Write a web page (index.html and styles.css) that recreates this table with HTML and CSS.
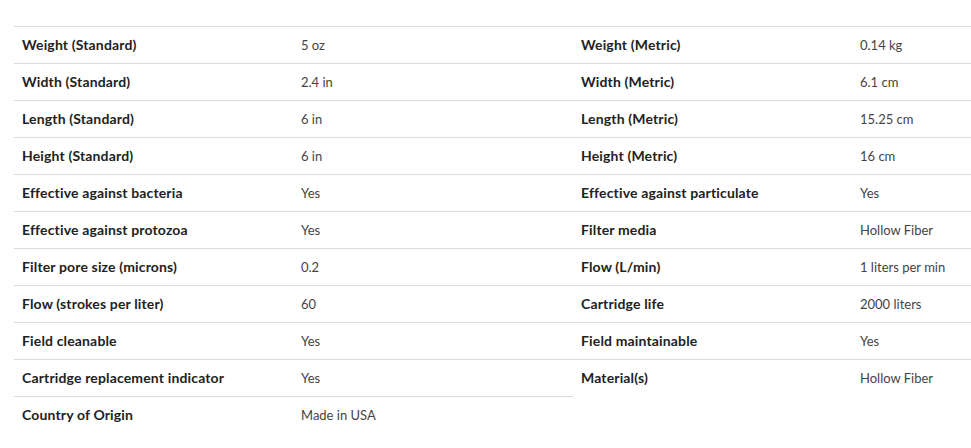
FILE: index.html
```html
<!DOCTYPE html>
<html>
<head>
<meta charset="utf-8">
<link rel="stylesheet" href="styles.css">
</head>
<body>
<div class="specs">
  <table class="spec-table">
    <tr><th>Weight (Standard)</th><td>5 oz</td></tr>
    <tr><th>Width (Standard)</th><td>2.4 in</td></tr>
    <tr><th>Length (Standard)</th><td>6 in</td></tr>
    <tr><th>Height (Standard)</th><td>6 in</td></tr>
    <tr><th>Effective against bacteria</th><td>Yes</td></tr>
    <tr><th>Effective against protozoa</th><td>Yes</td></tr>
    <tr><th>Filter pore size (microns)</th><td>0.2</td></tr>
    <tr><th>Flow (strokes per liter)</th><td>60</td></tr>
    <tr><th>Field cleanable</th><td>Yes</td></tr>
    <tr><th>Cartridge replacement indicator</th><td>Yes</td></tr>
    <tr><th>Country of Origin</th><td>Made in USA</td></tr>
  </table>
  <table class="spec-table">
    <tr><th>Weight (Metric)</th><td>0.14 kg</td></tr>
    <tr><th>Width (Metric)</th><td>6.1 cm</td></tr>
    <tr><th>Length (Metric)</th><td>15.25 cm</td></tr>
    <tr><th>Height (Metric)</th><td>16 cm</td></tr>
    <tr><th>Effective against particulate</th><td>Yes</td></tr>
    <tr><th>Filter media</th><td>Hollow Fiber</td></tr>
    <tr><th>Flow (L/min)</th><td>1 liters per min</td></tr>
    <tr><th>Cartridge life</th><td>2000 liters</td></tr>
    <tr><th>Field maintainable</th><td>Yes</td></tr>
    <tr><th>Material(s)</th><td>Hollow Fiber</td></tr>
  </table>
</div>
</body>
</html>
```
FILE: styles.css
```css
html, body {
  margin: 0;
  padding: 0;
  background: #fff;
}
body {
  font-family: Lato, "Liberation Sans", sans-serif;
  color: #222;
}
.specs {
  display: grid;
  grid-template-columns: 559px minmax(0, 1fr);
  padding: 26px 0 0 14px;
}
.spec-table {
  width: 100%;
  border-collapse: collapse;
  table-layout: fixed;
  align-self: start;
}
.spec-table tr {
  border-top: 1px solid #dcdcdc;
}
.spec-table th,
.spec-table td {
  height: 36px;
  padding: 0 8px;
  text-align: left;
  vertical-align: middle;
  line-height: 16px;
  white-space: nowrap;
}
.spec-table th {
  width: 263px;
  font-size: 14px;
  font-weight: 700;
  letter-spacing: 0.15px;
  color: #222;
}
.spec-table td {
  font-size: 13px;
  font-weight: 400;
  color: #444;
}
```
